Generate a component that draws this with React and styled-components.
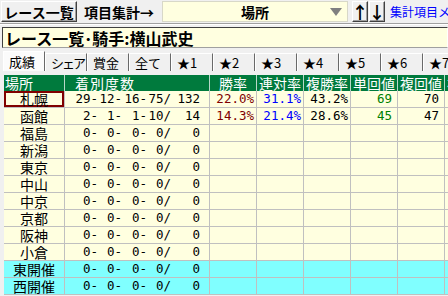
import React from "react";
import styled, { createGlobalStyle } from "styled-components";

const GlobalStyle = createGlobalStyle`
  html, body {
    margin: 0;
    padding: 0;
    background: #f0f0f0;
  }
  body {
    font-family: "Noto Sans CJK JP", "Noto Sans", sans-serif;
    width: 448px;
    height: 296px;
    overflow: hidden;
  }
`;

const Screen = styled.div`
  width: 448px;
  height: 296px;
  overflow: hidden;
  background: #f0f0f0;
  display: flex;
  flex-direction: column;
`;

const Toolbar = styled.div`
  display: flex;
  align-items: stretch;
  height: 21px;
  padding: 1px 0 0 1px;
  gap: 1px;
  & > * {
    flex: none;
  }
`;

const RaisedButton = styled.div`
  width: ${(p) => p.$w}px;
  box-sizing: border-box;
  display: flex;
  align-items: center;
  justify-content: center;
  white-space: nowrap;
  font-size: ${(p) => p.$size || 14}px;
  font-weight: bold;
  line-height: 1;
  color: #000;
  background: #f0f0f0;
  border: 1px solid;
  border-color: #ffffff #404040 #404040 #ffffff;
  box-shadow: inset -1px -1px 0 #a0a0a0;
`;

const FlatButton = styled.div`
  width: ${(p) => p.$w}px;
  display: flex;
  align-items: center;
  justify-content: center;
  white-space: nowrap;
  font-size: 14px;
  font-weight: bold;
  line-height: 1;
  background: #f0f0f0;
`;

const Combo = styled.div`
  width: 186px;
  box-sizing: border-box;
  margin-left: 1px;
  background: #ffffe0;
  border: 1px solid #d8d8c8;
  display: flex;
  align-items: center;
  position: relative;
  margin-right: 3px;
`;

const ComboText = styled.span`
  margin-left: 78px;
  font-size: 14px;
  font-weight: bold;
  line-height: 1;
`;

const ComboArrow = styled.span`
  position: absolute;
  right: 5px;
  top: 6px;
  width: 0;
  height: 0;
  border-left: 6px solid transparent;
  border-right: 6px solid transparent;
  border-top: 8px solid #808080;
`;

const LinkText = styled.div`
  && {
    flex: 1 1 auto;
  }
  min-width: 0;
  margin-left: 4px;
  display: flex;
  align-items: center;
  white-space: nowrap;
  overflow: hidden;
  font-size: 12px;
  line-height: 1;
  color: #0000ff;
`;

const Divider = styled.div`
  height: 0;
  margin-top: 1px;
  border-top: 1px solid #a0a0a0;
  border-bottom: 1px solid #ffffff;
`;

const TitleBox = styled.div`
  margin: 2px 0 0 2px;
  height: 21px;
  box-sizing: border-box;
  background: #ffffe0;
  border: 1px solid;
  border-color: #404040 #ffffff #a0a0a0 #404040;
  display: flex;
  align-items: center;
  padding-left: 2px;
  font-size: 16px;
  font-weight: bold;
  line-height: 1;
  white-space: nowrap;
`;

const Tabs = styled.div`
  display: flex;
  height: 20px;
  margin-top: 3px;
  padding-left: 3px;
  align-items: flex-end;
`;

const Tab = styled.div`
  width: 42px;
  flex: none;
  box-sizing: border-box;
  height: ${(p) => (p.$active ? 20 : 18)}px;
  display: flex;
  align-items: center;
  padding-left: ${(p) => (p.$active ? 5 : 5)}px;
  font-size: 13px;
  letter-spacing: ${(p) => p.$ls || 0}px;
  line-height: 1;
  white-space: nowrap;
  overflow: hidden;
  background: ${(p) => (p.$active ? "#fbfbfb" : "#f0f0f0")};
  border-left: 1px solid #ffffff;
  border-top: 1px solid #ffffff;
  border-right: 1px solid #696969;
`;

const Table = styled.div`
  margin: 4px 0 0 4px;
  display: grid;
  grid-template-columns: 61px 145px 47px 47px 47px 47px 47px 47px;
  grid-auto-rows: 17px;
  grid-template-rows: 16px;
`;

const HeadCell = styled.div`
  background: #007a3d;
  color: #ffffff;
  font-size: 14px;
  line-height: 16px;
  white-space: nowrap;
  overflow: hidden;
  border-right: 1px solid #b8d8c8;
  text-align: ${(p) => p.$align || "center"};
  padding-left: ${(p) => p.$pad || 0}px;
  letter-spacing: ${(p) => p.$ls || 0}px;
`;

const Cell = styled.div`
  background: ${(p) => (p.$cyan ? "#80ffff" : "#ffffe0")};
  border-right: 1px solid #c0c0c0;
  border-bottom: 1px solid #c0c0c0;
  box-sizing: border-box;
  display: flex;
  align-items: center;
  justify-content: flex-end;
  padding-right: ${(p) => p.$pr || 0}px;
  color: ${(p) => p.$color || "#000"};
  font-family: "DejaVu Sans Mono", monospace;
  font-size: 12.5px;
  line-height: 1;
  white-space: nowrap;
  overflow: hidden;
`;

const PlaceCell = styled(Cell)`
  font-family: "Noto Sans CJK JP", sans-serif;
  font-size: 14px;
  justify-content: center;
  ${(p) => p.$selected && `box-shadow: inset 0 0 0 2px #800000;`}
`;

const Counts = styled.div`
  display: grid;
  grid-template-columns: 33px 24px 25px 24px 29px;
  margin-right: auto;
  & > span {
    text-align: right;
  }
`;

const PLACES = [
  { name: "札幌", c: [29, 12, 16, 75, 132], win: "22.0%", ren: "31.1%", fuku: "43.2%", tan: "69", fk: "70" },
  { name: "函館", c: [2, 1, 1, 10, 14], win: "14.3%", ren: "21.4%", fuku: "28.6%", tan: "45", fk: "47" },
  { name: "福島" },
  { name: "新潟" },
  { name: "東京" },
  { name: "中山" },
  { name: "中京" },
  { name: "京都" },
  { name: "阪神" },
  { name: "小倉" },
  { name: "東開催", cyan: true },
  { name: "西開催", cyan: true },
];

const TABS = ["成績", "シェア", "賞金", "全て", "★1", "★2", "★3", "★4", "★5", "★6", "★7"];

export default function App() {
  return (
    <>
      <GlobalStyle />
      <Screen>
        <Toolbar>
          <RaisedButton $w={76}>レース一覧</RaisedButton>
          <FlatButton $w={82}>項目集計→</FlatButton>
          <Combo>
            <ComboText>場所</ComboText>
            <ComboArrow />
          </Combo>
          <RaisedButton $w={16} $size={17}>↑</RaisedButton>
          <RaisedButton $w={16} $size={17}>↓</RaisedButton>
          <LinkText>集計項目メニュー</LinkText>
        </Toolbar>
        <Divider />
        <TitleBox>レース一覧･騎手:横山武史</TitleBox>
        <Tabs>
          {TABS.map((t, i) => (
            <Tab key={t} $active={i === 0} $ls={t === "シェア" ? -2 : 0}>
              {t}
            </Tab>
          ))}
        </Tabs>
        <Table>
          <HeadCell $align="left" $pad={1}>場所</HeadCell>
          <HeadCell $align="left" $pad={10} $ls={1}>着別度数</HeadCell>
          <HeadCell>勝率</HeadCell>
          <HeadCell>連対率</HeadCell>
          <HeadCell>複勝率</HeadCell>
          <HeadCell>単回値</HeadCell>
          <HeadCell>複回値</HeadCell>
          <HeadCell>複回値</HeadCell>
          {PLACES.map((p, i) => {
            const c = p.c || [0, 0, 0, 0, 0];
            return (
              <React.Fragment key={p.name}>
                <PlaceCell $cyan={p.cyan} $selected={i === 0}>
                  {p.name}
                </PlaceCell>
                <Cell $cyan={p.cyan}>
                  <Counts>
                    <span>{c[0]}-</span>
                    <span>{c[1]}-</span>
                    <span>{c[2]}-</span>
                    <span>{c[3]}/</span>
                    <span>{c[4]}</span>
                  </Counts>
                </Cell>
                <Cell $cyan={p.cyan} $pr={2} $color="#800000">{p.win}</Cell>
                <Cell $cyan={p.cyan} $pr={2} $color="#0000ff">{p.ren}</Cell>
                <Cell $cyan={p.cyan} $pr={2}>{p.fuku}</Cell>
                <Cell $cyan={p.cyan} $pr={5} $color="#008000">{p.tan}</Cell>
                <Cell $cyan={p.cyan} $pr={5}>{p.fk}</Cell>
                <Cell $cyan={p.cyan} />
              </React.Fragment>
            );
          })}
        </Table>
      </Screen>
    </>
  );
}
